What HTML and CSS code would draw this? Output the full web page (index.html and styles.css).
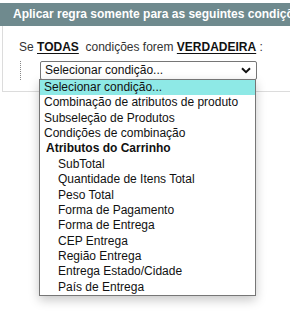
FILE: index.html
```html
<!DOCTYPE html>
<html lang="pt-BR">
<head>
  <meta charset="UTF-8">
  <title>Condições</title>
  <link rel="stylesheet" href="styles.css">
</head>
<body>
  <div class="box">
    <div class="box-head">Aplicar regra somente para as seguintes condições</div>
    <div class="box-body">
      <p class="rule-line">Se <b>TODAS</b>&nbsp; condições forem <b>VERDADEIRA</b> :</p>
      <div class="rule-children">
        <div class="fake-select">
          <span>Selecionar condição...</span>
          <svg class="chevron" width="10" height="7" viewBox="0 0 10 7"><path d="M1 1.2 L5 5.2 L9 1.2" fill="none" stroke="#111" stroke-width="2"/></svg>
        </div>
        <ul class="dropdown">
          <li class="active">Selecionar condição...</li>
          <li>Combinação de atributos de produto</li>
          <li>Subseleção de Produtos</li>
          <li>Condições de combinação</li>
          <li class="group">Atributos do Carrinho</li>
          <li class="sub">SubTotal</li>
          <li class="sub">Quantidade de Itens Total</li>
          <li class="sub">Peso Total</li>
          <li class="sub">Forma de Pagamento</li>
          <li class="sub">Forma de Entrega</li>
          <li class="sub">CEP Entrega</li>
          <li class="sub">Região Entrega</li>
          <li class="sub">Entrega Estado/Cidade</li>
          <li class="sub">País de Entrega</li>
        </ul>
      </div>
    </div>
  </div>
</body>
</html>
```

FILE: styles.css
```css
html {
  height: 100%;
}
body {
  margin: 0;
  padding: 3px 0 0 0;
  min-height: 100%;
  box-sizing: border-box;
  font-family: "Liberation Sans", Arial, sans-serif;
  background: #fff;
}
.box-head {
  background: #6f8a8e;
  color: #fff;
  font-weight: bold;
  font-size: 12px;
  height: 23px;
  line-height: 23px;
  padding-left: 13px;
  white-space: nowrap;
  overflow: hidden;
}
.box-body {
  margin-left: 2px;
  border: 1px solid #dcdcdc;
  border-top: none;
  border-right: none;
  height: 65px;
  padding: 0 0 0 16px;
}
.rule-line {
  margin: 0;
  padding-top: 14px;
  font-size: 12px;
  line-height: 15px;
  color: #333;
}
.rule-line b {
  color: #111;
  text-decoration: underline;
  text-decoration-thickness: 1px;
  text-underline-offset: 2px;
}
.rule-children {
  position: relative;
  margin-top: 7px;
  margin-left: 1px;
  border-left: 1px dotted #888;
  height: 19px;
  padding-left: 19px;
}
.fake-select {
  box-sizing: border-box;
  width: 217px;
  height: 19px;
  border: 1px solid #767676;
  border-radius: 2px;
  margin-top: -1px;
  padding: 0 0 0 4px;
  font-size: 12px;
  line-height: 17px;
  color: #111;
  display: flex;
  align-items: center;
  justify-content: space-between;
}
.chevron {
  margin-right: 5px;
}
.dropdown {
  position: absolute;
  top: 18px;
  left: 18px;
  width: 215px;
  margin: 0;
  padding: 0;
  list-style: none;
  background: #fff;
  border: 1px solid #767676;
  box-shadow: 0 4px 10px rgba(0,0,0,0.22);
  font-size: 12px;
  color: #111;
  z-index: 5;
}
.dropdown li {
  height: 15.36px;
  line-height: 15px;
  padding-left: 4px;
  white-space: nowrap;
}
.dropdown li.active {
  background: #8ee9e6;
}
.dropdown li.group {
  font-weight: bold;
  padding-left: 6px;
}
.dropdown li.sub {
  padding-left: 18px;
}
```
